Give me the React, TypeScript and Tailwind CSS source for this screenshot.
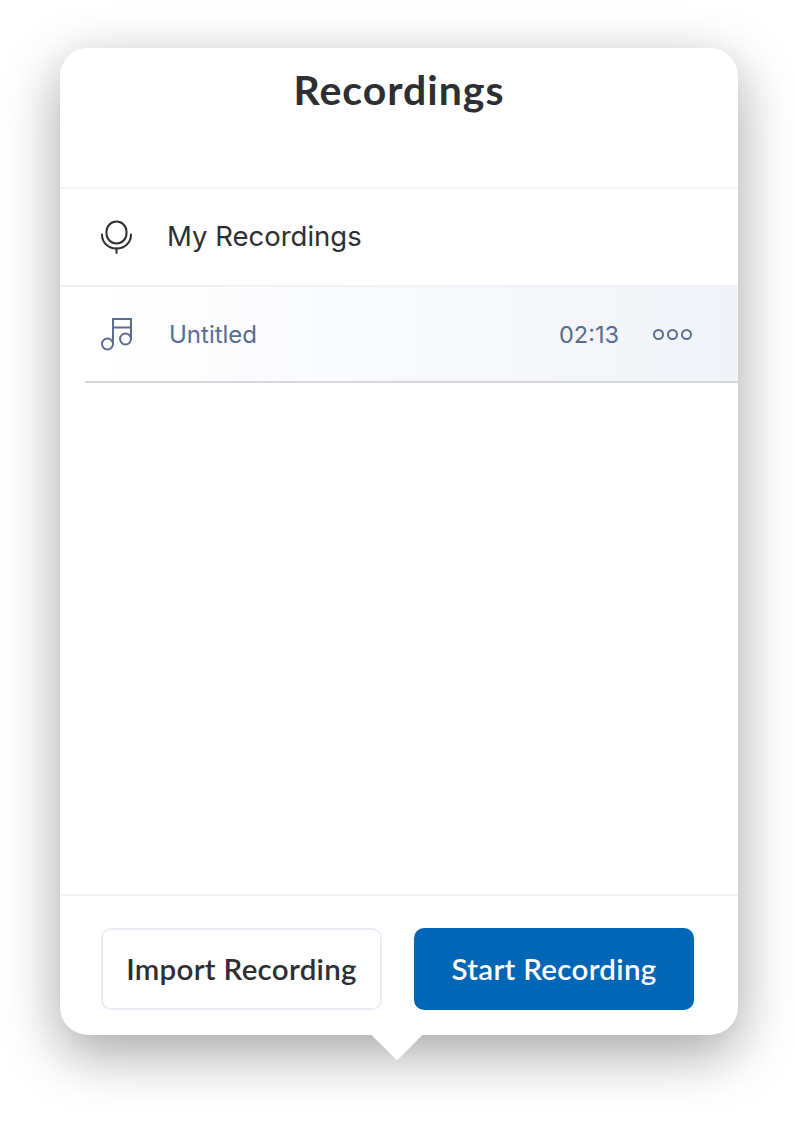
import React from "react";

const MicIcon: React.FC = () => (
  <svg width="34" height="34" viewBox="0 0 34 34" fill="none" stroke="#2d2f33" strokeWidth="2" strokeLinecap="round">
    <rect x="6.500" y="1.500" width="20" height="22" rx="10" />
    <path d="M2 14.500c0 8 6 14 14.500 14S31 22.500 31 14.500" />
    <path d="M16.500 28.500v4.500" />
  </svg>
);

const NoteIcon: React.FC = () => (
  <svg width="34" height="34" viewBox="0 0 34 34" fill="none" stroke="#5a6c8f" strokeWidth="2">
    <circle cx="7.500" cy="26" r="5.500" />
    <circle cx="25.500" cy="21" r="5.500" />
    <path d="M13 26V1H31V21" />
    <path d="M13 9.500H31" />
  </svg>
);

const App: React.FC = () => {
  return (
    <div className="h-[1133px] w-[795px] overflow-hidden bg-white pt-[48px] pl-[60px] font-['Inter',sans-serif]">
      <div className="relative w-[678px] h-[987px] rounded-[28px] bg-white shadow-[0_18px_56px_rgba(0,0,0,0.36)]">
        {/* Pointer */}
        <div className="absolute left-[319px] bottom-[-18px] w-[36px] h-[36px] rotate-45 rounded-[2px] bg-white" />

        <div className="relative flex h-full flex-col">
          <div className="h-[141px] shrink-0 border-b-2 border-[#f1f3f8] pt-[17px] text-center">
            <h1 className="font-['Lato',sans-serif] text-[41px] leading-[50px] font-bold tracking-[1px] text-[#2d2f33]">Recordings</h1>
          </div>

          <div className="flex h-[98px] shrink-0 items-center border-b-2 border-[#eff1f6] pl-[40px]">
            <MicIcon />
            <span className="ml-[33px] text-[27.500px] text-[#2d2f33]">My Recordings</span>
          </div>

          <div className="ml-[25px] flex h-[96px] shrink-0 items-center border-b-2 border-[#d5d7dc] bg-gradient-to-r from-white to-[#f0f3f8] pt-[1px] pl-[15px]">
            <NoteIcon />
            <span className="ml-[35px] flex-1 text-[24px] text-[#5a6c8f]">Untitled</span>
            <span className="text-[23.500px] text-[#5a6c8f]">02:13</span>
            <div className="mr-[46px] ml-[34px] flex gap-[3px]">
              <span className="h-[11px] w-[11px] rounded-full border-2 border-[#5a6c8f]" />
              <span className="h-[11px] w-[11px] rounded-full border-2 border-[#5a6c8f]" />
              <span className="h-[11px] w-[11px] rounded-full border-2 border-[#5a6c8f]" />
            </div>
          </div>

          <div className="flex-1" />

          <div className="flex h-[141px] shrink-0 items-start gap-[32px] border-t-2 border-[#f1f3f8] pt-[32px] pl-[41px]">
            <button className="h-[82px] w-[281px] rounded-[10px] border-2 border-[#e8edf8] bg-white font-['Lato',sans-serif] text-[29.500px] font-semibold tracking-[0.3px] text-[#2d2f33]">
              Import Recording
            </button>
            <button className="h-[82px] w-[280px] rounded-[10px] bg-[#0066b5] font-['Lato',sans-serif] text-[29.500px] font-semibold tracking-[0.3px] text-white">
              Start Recording
            </button>
          </div>
        </div>
      </div>
    </div>
  );
};

export default App;
